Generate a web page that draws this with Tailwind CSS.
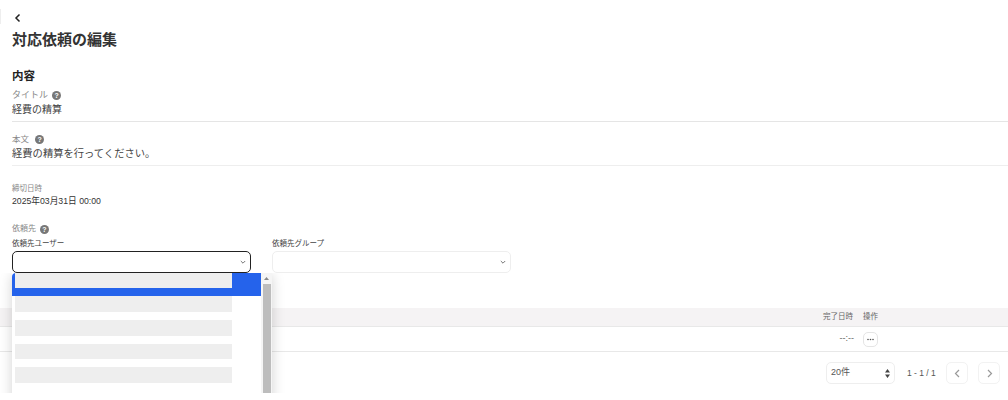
<!DOCTYPE html>
<html lang="ja"><head><meta charset="utf-8"><script src="https://cdn.jsdelivr.net/npm/@tailwindcss/browser@4"></script></head>
<body class="bg-white overflow-hidden">
<div class="relative w-[1008px] h-[400px] overflow-hidden pl-3 text-[#333] font-['Liberation_Sans','Noto_Sans_CJK_JP',sans-serif]">
  <div class="absolute left-0 top-[9px] w-px h-[15px] bg-[#eee]"></div>
  <div class="h-[30px] pt-[13px]"><svg class="w-[10px] h-[10px] ml-[1px]" viewBox="0 0 10 10" fill="none" stroke="#222" stroke-width="1.5"><path d="M6.5 1.5 3 5l3.5 3.5"/></svg></div>
  <h1 class="mt-[1px] text-[15px] leading-[18px] font-bold text-[#333]">対応依頼の編集</h1>
  <h2 class="mt-[20px] text-[11.5px] leading-[14px] font-bold text-[#222]">内容</h2>
  <div class="mt-[6px] flex items-center gap-[4px] h-[13px] text-[9px] text-[#888]">タイトル<span class="w-[9px] h-[9px] rounded-full bg-[#777] text-white text-[7px] leading-[9px] text-center font-bold">?</span></div>
  <div class="mt-[1px] text-[10px] leading-[14px] text-[#444]">経費の精算</div>
  <div class="mt-[4px] border-t border-[#e5e5e5]"></div>
  <div class="mt-[11px] flex items-center gap-[6px] h-[13px] text-[8.5px] text-[#888]">本文<span class="w-[9px] h-[9px] rounded-full bg-[#777] text-white text-[7px] leading-[9px] text-center font-bold">?</span></div>
  <div class="mt-[1px] text-[10.3px] leading-[14px] text-[#444]">経費の精算を行ってください。</div>
  <div class="mt-[4px] border-t border-[#eeeeee]"></div>
  <div class="mt-[17px] text-[7.5px] leading-[12px] text-[#888]">締切日時</div>
  <div class="text-[8.7px] leading-[12px] text-[#333]">2025年03月31日 00:00</div>
  <div class="mt-[16px] flex items-center gap-[4px] h-[12px] text-[8px] text-[#888]">依頼先<span class="w-[9px] h-[9px] rounded-full bg-[#777] text-white text-[7px] leading-[9px] text-center font-bold">?</span></div>
  <div class="mt-[3px] flex gap-[21px]">
    <div class="w-[239px]">
      <div class="text-[7.5px] leading-[12px] text-[#444]">依頼先ユーザー</div>
      <div class="mt-[1px] h-[22px] rounded-[5px] border border-[#222] flex items-center justify-end pr-[4px]"><svg class="w-[6px] h-[6px]" viewBox="0 0 6 6" fill="none" stroke="#777"><path d="M.8 2 3 4.2 5.2 2"/></svg></div>
    </div>
    <div class="w-[239px]">
      <div class="text-[7.5px] leading-[12px] text-[#444]">依頼先グループ</div>
      <div class="mt-[1px] h-[22px] rounded-[5px] border border-[#eeeeee] flex items-center justify-end pr-[4px]"><svg class="w-[6px] h-[6px]" viewBox="0 0 6 6" fill="none" stroke="#777"><path d="M.8 2 3 4.2 5.2 2"/></svg></div>
    </div>
  </div>
  <div class="-ml-3 mt-[35px] h-[19px] bg-[#f5f3f4] border-b border-[#e8e8e8] flex items-center justify-end pr-[130px] gap-[10px] text-[7.5px] text-[#666]"><span>完了日時</span><span>操作</span></div>
  <div class="-ml-3 h-[25px] border-b border-[#e8e8e8] flex items-center justify-end pr-[130px] gap-[9px] text-[9px] text-[#666]"><span>--:--</span><span class="w-[15px] h-[15px] rounded-[5px] border border-[#e5e5e5] flex items-center justify-center"><svg class="w-[7px] h-[3px]" viewBox="0 0 7 3" fill="#555"><circle cx="1" cy="1.5" r=".8"/><circle cx="3.5" cy="1.5" r=".8"/><circle cx="6" cy="1.5" r=".8"/></svg></span></div>
  <div class="-ml-3 mt-[10px] h-[22px] flex items-center justify-end pr-[8px] text-[#555]">
    <div class="w-[69px] h-[22px] rounded-[5px] border border-[#eeeeee] flex items-center justify-between pl-[4px] pr-[4px] text-[9px]">20件<svg class="w-[5px] h-[9px]" viewBox="0 0 5 9" fill="#444"><path d="M2.5 0 5 3.5H0zM2.5 9 0 5.5h5z"/></svg></div>
    <div class="ml-[12px] text-[8.5px] w-[29px] whitespace-nowrap">1 - 1 / 1</div>
    <div class="ml-[10px] w-[22px] h-[22px] rounded-[5px] border border-[#f2f2f2] flex items-center justify-center"><svg class="w-[9px] h-[9px]" viewBox="0 0 9 9" fill="none" stroke="#999" stroke-width="1.2"><path d="M6 1 2.5 4.5 6 8"/></svg></div>
    <div class="ml-[10px] w-[22px] h-[22px] rounded-[5px] border border-[#f2f2f2] flex items-center justify-center"><svg class="w-[9px] h-[9px]" viewBox="0 0 9 9" fill="none" stroke="#999" stroke-width="1.2"><path d="M3 1l3.5 3.5L3 8"/></svg></div>
  </div>
  <div class="absolute left-0 top-[273px] w-[290px] h-[120px] overflow-hidden pl-3">
    <div class="w-[260px] h-[140px] bg-white shadow-[0_2px_12px_rgba(0,0,0,0.18)] flex">
      <div class="w-[249px] shrink-0">
        <div class="h-[23px] bg-[#2563eb] pl-[3px] rounded-tl-[4px]"><div class="w-[217px] h-[15px] bg-[#eeeeee]"></div></div>
        <div class="pl-[3px] flex flex-col gap-[8px]">
          <div class="w-[217px] h-[16px] bg-[#eeeeee]"></div>
          <div class="w-[217px] h-[16px] bg-[#eeeeee]"></div>
          <div class="w-[217px] h-[15px] bg-[#eeeeee]"></div>
          <div class="w-[217px] h-[16px] bg-[#eeeeee]"></div>
        </div>
      </div>
      <div class="w-[11px] bg-[#f5f5f5] flex flex-col items-center">
        <div class="h-[11px] flex items-center"><svg class="w-[5px] h-[3px]" viewBox="0 0 5 3" fill="#888"><path d="M2.5 0 5 3H0z"/></svg></div>
        <div class="w-[8px] flex-1 bg-[#bdbdbd]"></div>
      </div>
    </div>
  </div>
</div>
</body></html>
